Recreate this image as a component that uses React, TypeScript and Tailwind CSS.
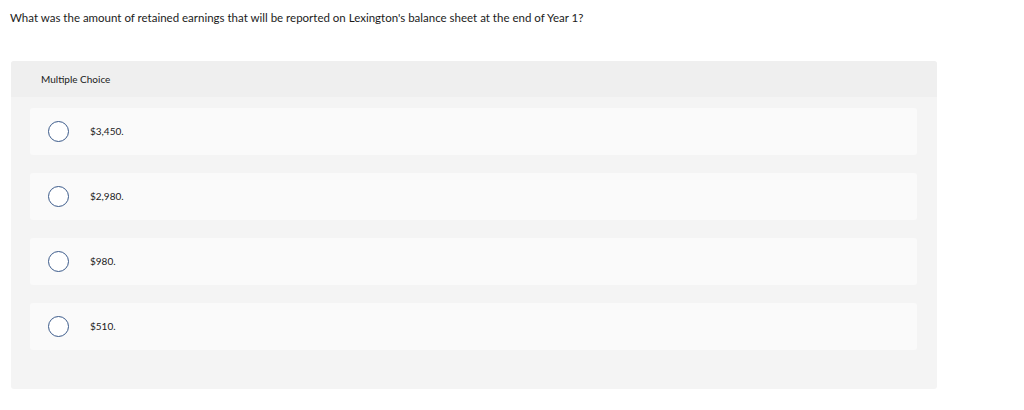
import React from 'react';

const options = ['$3,450.', '$2,980.', '$980.', '$510.'];

export default function App() {
  return (
    <div className="h-[410px] w-full bg-white pt-[10px] text-[#1b1b1b]" style={{ fontFamily: 'Lato, "Liberation Sans", sans-serif' }}>
      <p className="pl-[10px] text-[11.5px] leading-[16px]">
        What was the amount of retained earnings that will be reported on Lexington's balance sheet at the end of Year 1?
      </p>

      <div className="ml-[11px] mt-[35px] w-[926px] overflow-hidden rounded-[3px] bg-[#f4f4f4]">
        {/* header */}
        <div className="flex h-[36px] items-center bg-[#efefef] pl-[30px] text-[10px]">Multiple Choice</div>

        {/* choices */}
        <div className="flex flex-col gap-[18px] pb-[39px] pl-[19px] pr-[20px] pt-[11px]">
          {options.map((o) => (
            <label key={o} className="flex h-[47px] items-center gap-[21px] rounded-[3px] bg-[#fafafa] pl-[18px]">
              <span className="h-[21px] w-[21px] rounded-full border border-[#3b5a8a] bg-white" />
              <span className="text-[10px]">{o}</span>
            </label>
          ))}
        </div>
      </div>
    </div>
  );
}
